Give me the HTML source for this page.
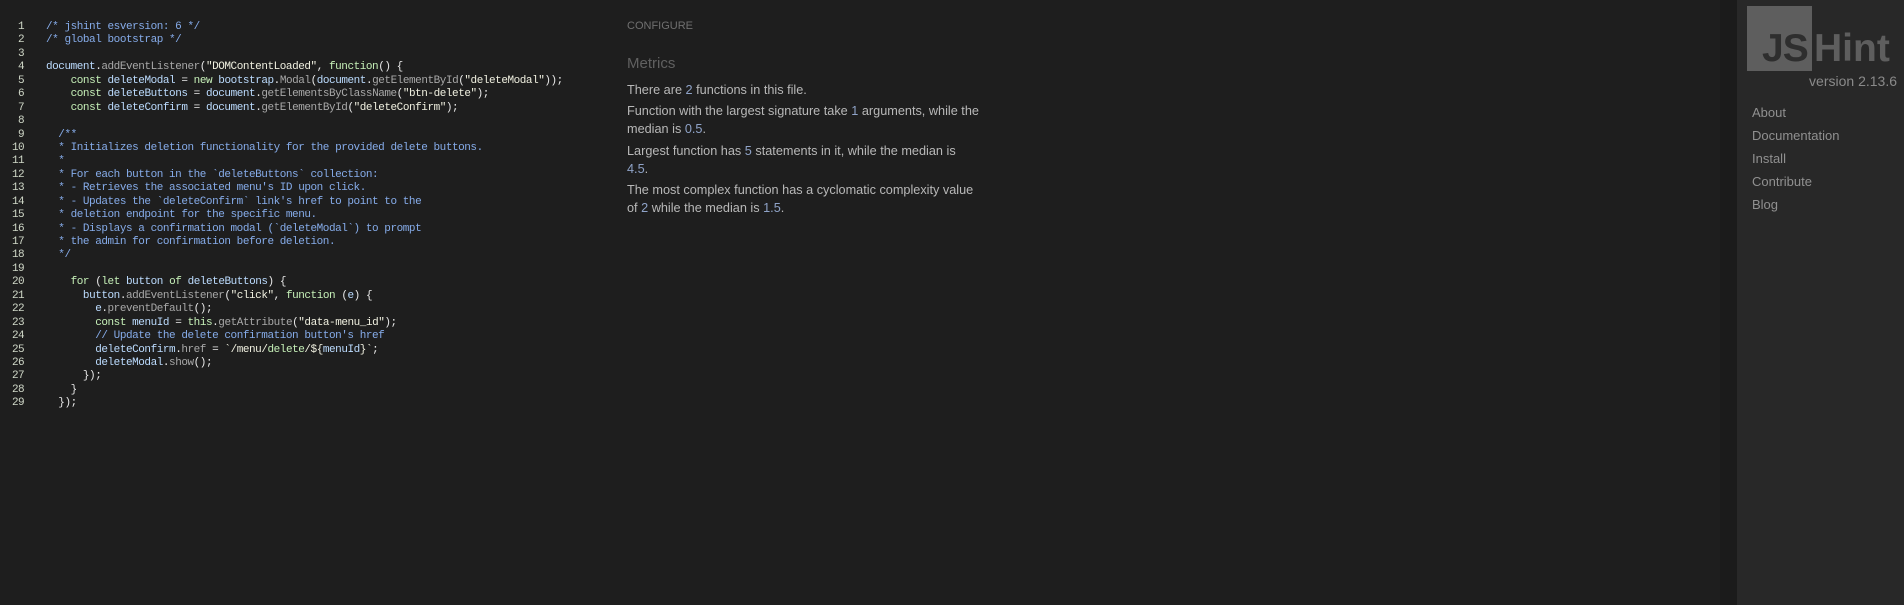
<!DOCTYPE html>
<html><head><meta charset="utf-8"><style>
html,body{margin:0;padding:0;width:1904px;height:605px;background:#1e1e1e;overflow:hidden;font-family:"Liberation Sans",sans-serif}
#code{position:absolute;left:0;top:21px;font-family:"Liberation Mono",monospace;font-size:11px;letter-spacing:-0.45px;line-height:13.43px;color:#e8e8e8;white-space:pre}
.ln{display:inline-block;width:24px;text-align:right;color:#d0d8c8;margin-right:22px;letter-spacing:-0.6px}
.c{color:#86acea}.k{color:#c6f0b8}.v{color:#bcdcff}.m{color:#a8a8a8}.s{color:#f0f0e0}
#mid{position:absolute;left:627px;top:0;width:372px;color:#b8b8b8;font-size:13px}
#mid .cfg{position:absolute;top:20px;font-size:11px;color:#707070}
#mid .met{position:absolute;top:55px;font-size:15px;color:#606060}
#mid p{margin:0;line-height:18px;position:absolute;white-space:nowrap;font-size:12.7px}
#mid b{font-weight:normal;color:#8fa3c8}
#strip{position:absolute;left:1720px;top:0;width:17px;height:605px;background:#1b1b1b}
#side{position:absolute;left:1737px;top:0;width:167px;height:605px;background:#282828}
#logo{position:absolute;left:10px;top:6px;width:65px;height:65px;background:#5e5e5e;overflow:hidden}
#logo span{position:absolute;left:15px;top:21px;font-size:39px;font-weight:bold;color:#2e2e2e;letter-spacing:-1px;line-height:44px}
#hint{position:absolute;left:77px;top:27px;font-size:39px;font-weight:bold;color:#5e5e5e;line-height:44px}
#ver{position:absolute;right:7px;top:73px;font-size:14px;color:#8a8a8a}
#nav a{position:absolute;left:15px;font-size:13px;color:#909090;text-decoration:none}
</style></head><body>
<div id="code"><span class="ln">1</span><span class="c">/* jshint esversion: 6 */</span>
<span class="ln">2</span><span class="c">/* global bootstrap */</span>
<span class="ln">3</span>
<span class="ln">4</span><span class="v">document</span>.<span class="m">addEventListener</span>(<span class="s">"DOMContentLoaded"</span>, <span class="k">function</span>() {
<span class="ln">5</span>    <span class="k">const</span> <span class="v">deleteModal</span> = <span class="k">new</span> <span class="v">bootstrap</span>.<span class="m">Modal</span>(<span class="v">document</span>.<span class="m">getElementById</span>(<span class="s">"deleteModal"</span>));
<span class="ln">6</span>    <span class="k">const</span> <span class="v">deleteButtons</span> = <span class="v">document</span>.<span class="m">getElementsByClassName</span>(<span class="s">"btn-delete"</span>);
<span class="ln">7</span>    <span class="k">const</span> <span class="v">deleteConfirm</span> = <span class="v">document</span>.<span class="m">getElementById</span>(<span class="s">"deleteConfirm"</span>);
<span class="ln">8</span>
<span class="ln">9</span><span class="c">  /**</span>
<span class="ln">10</span><span class="c">  * Initializes deletion functionality for the provided delete buttons.</span>
<span class="ln">11</span><span class="c">  *</span>
<span class="ln">12</span><span class="c">  * For each button in the `deleteButtons` collection:</span>
<span class="ln">13</span><span class="c">  * - Retrieves the associated menu's ID upon click.</span>
<span class="ln">14</span><span class="c">  * - Updates the `deleteConfirm` link's href to point to the</span>
<span class="ln">15</span><span class="c">  * deletion endpoint for the specific menu.</span>
<span class="ln">16</span><span class="c">  * - Displays a confirmation modal (`deleteModal`) to prompt</span>
<span class="ln">17</span><span class="c">  * the admin for confirmation before deletion.</span>
<span class="ln">18</span><span class="c">  */</span>
<span class="ln">19</span>
<span class="ln">20</span>    <span class="k">for</span> (<span class="k">let</span> <span class="v">button</span> <span class="k">of</span> <span class="v">deleteButtons</span>) {
<span class="ln">21</span>      <span class="v">button</span>.<span class="m">addEventListener</span>(<span class="s">"click"</span>, <span class="k">function</span> (<span class="v">e</span>) {
<span class="ln">22</span>        <span class="v">e</span>.<span class="m">preventDefault</span>();
<span class="ln">23</span>        <span class="k">const</span> <span class="v">menuId</span> = <span class="k">this</span>.<span class="m">getAttribute</span>(<span class="s">"data-menu_id"</span>);
<span class="ln">24</span>        <span class="c">// Update the delete confirmation button's href</span>
<span class="ln">25</span>        <span class="v">deleteConfirm</span>.<span class="m">href</span> = <span class="s">`/menu/</span><span class="k">delete</span><span class="s">/${</span><span class="v">menuId</span><span class="s">}`</span>;
<span class="ln">26</span>        <span class="v">deleteModal</span>.<span class="m">show</span>();
<span class="ln">27</span>      });
<span class="ln">28</span>    }
<span class="ln">29</span>  });</div>
<div id="mid">
<div class="cfg">CONFIGURE</div>
<div class="met">Metrics</div>
<p style="top:81px">There are <b>2</b> functions in this file.</p>
<p style="top:102px">Function with the largest signature take <b>1</b> arguments, while the<br>median is <b>0.5</b>.</p>
<p style="top:142px">Largest function has <b>5</b> statements in it, while the median is<br><b>4.5</b>.</p>
<p style="top:181px">The most complex function has a cyclomatic complexity value<br>of <b>2</b> while the median is <b>1.5</b>.</p>
</div>
<div id="strip"></div>
<div id="side">
<div id="logo"><span>JS</span></div>
<div id="hint">Hint</div>
<div id="ver">version 2.13.6</div>
<div id="nav">
<a style="top:105px">About</a>
<a style="top:128px">Documentation</a>
<a style="top:151px">Install</a>
<a style="top:174px">Contribute</a>
<a style="top:197px">Blog</a>
</div>
</div>
</body></html>
